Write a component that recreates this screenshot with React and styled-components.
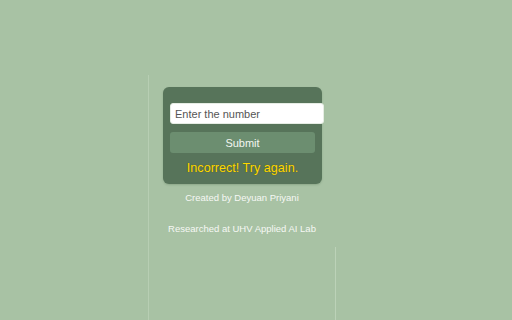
import React, { useState } from "react"
import styled, { createGlobalStyle } from "styled-components"

const GlobalStyle = createGlobalStyle`
  html, body {
    margin: 0;
    padding: 0;
    background: #a8c2a4;
    font-family: "Liberation Sans", Arial, sans-serif;
  }
`

const Page = styled.div`
  width: 512px;
  height: 320px;
  overflow: hidden;
  display: flex;
  padding-top: 75px;
  box-sizing: border-box;
`

const Column = styled.div`
  margin-left: 148px;
  width: 186px;
  height: 245px;
  border-left: 1px solid #b7ceb3;
  display: flex;
  flex-direction: column;
  align-items: center;
  position: relative;
`

const RightLine = styled.div`
  position: absolute;
  right: -1px;
  top: 172px;
  bottom: 0;
  width: 1px;
  background: #bcd2b8;
`

const Card = styled.div`
  margin-top: 12px;
  margin-left: 1px;
  width: 159px;
  box-sizing: border-box;
  padding: 16px 7px 9px;
  background: #57745a;
  border-radius: 6px;
  display: flex;
  flex-direction: column;
  align-items: flex-start;
  box-shadow: 0 1px 2px rgba(60, 90, 60, 0.25);
`

const Input = styled.input`
  width: 100%;
  height: 19px;
  padding: 0 3px 0 4px;
  margin: 0;
  border: 1px solid #e6ede4;
  border-radius: 3px;
  background: #ffffff;
  font-family: "Liberation Sans", Arial, sans-serif;
  font-size: 11px;
  color: #333;
  outline: none;
  box-sizing: content-box;
  margin-right: -1px;

  &::placeholder {
    color: #555;
  }
`

const Button = styled.button`
  width: 100%;
  height: 21px;
  margin-top: 8px;
  border: none;
  border-radius: 3px;
  background: #6c8e70;
  color: #f2f6f0;
  font-family: "Liberation Sans", Arial, sans-serif;
  font-size: 11px;
  cursor: pointer;
`

const Message = styled.div`
  align-self: center;
  margin-top: 8px;
  font-size: 12.6px;
  line-height: 14px;
  color: #ffd800;
  text-shadow: 0 0 1px rgba(70, 70, 0, 0.6);
`

const Credit = styled.div`
  font-size: 9.5px;
  color: #f6f8f4;
  margin-top: ${(p) => p.gap}px;
`

export default function App() {
  const [value, setValue] = useState("")
  return (
    <>
      <GlobalStyle />
      <Page>
        <Column>
          <RightLine />
          <Card>
            <Input
              placeholder="Enter the number"
              value={value}
              onChange={(e) => setValue(e.target.value)}
            />
            <Button>Submit</Button>
            <Message>Incorrect! Try again.</Message>
          </Card>
          <Credit gap={8}>Created by Deyuan Priyani</Credit>
          <Credit gap={20}>Researched at UHV Applied AI Lab</Credit>
        </Column>
      </Page>
    </>
  )
}
